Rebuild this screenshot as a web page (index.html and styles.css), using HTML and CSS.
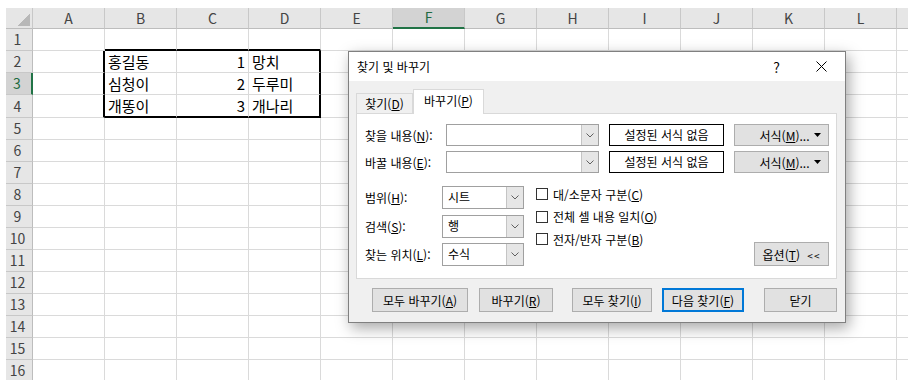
FILE: index.html
```html
<!DOCTYPE html>
<html lang="ko">
  <head>
    <meta charset="utf-8" />
    <title>찾기 및 바꾸기</title>
    <link rel="stylesheet" href="styles.css">
  </head>

  <body>
    <div class="sheet-wrap">
      <table class="sheet">
        <colgroup>
          <col class="rh">
          <col><col><col><col><col><col><col><col><col><col><col><col><col>
        </colgroup>
        <thead>
          <tr>
            <th class="corner"></th>
            <th>A</th><th>B</th><th>C</th><th>D</th><th>E</th><th class="sel-col">F</th>
            <th>G</th><th>H</th><th>I</th><th>J</th><th>K</th><th>L</th><th></th>
          </tr>
        </thead>
        <tbody>
          <tr><th>1</th><td></td><td class="bt"></td><td class="bt"></td><td class="bt"></td><td></td><td></td><td></td><td></td><td></td><td></td><td></td><td></td><td></td></tr>
          <tr><th>2</th><td class="bl"></td><td>홍길동</td><td class="num">1</td><td class="br">망치</td><td></td><td></td><td></td><td></td><td></td><td></td><td></td><td></td><td></td></tr>
          <tr><th class="sel-row">3</th><td class="bl"></td><td>심청이</td><td class="num">2</td><td class="br">두루미</td><td></td><td></td><td></td><td></td><td></td><td></td><td></td><td></td><td></td></tr>
          <tr><th>4</th><td class="bl"></td><td class="bb">개똥이</td><td class="bb num">3</td><td class="bb br">개나리</td><td></td><td></td><td></td><td></td><td></td><td></td><td></td><td></td><td></td></tr>
          <tr><th>5</th><td></td><td></td><td></td><td></td><td></td><td></td><td></td><td></td><td></td><td></td><td></td><td></td><td></td></tr>
          <tr><th>6</th><td></td><td></td><td></td><td></td><td></td><td></td><td></td><td></td><td></td><td></td><td></td><td></td><td></td></tr>
          <tr><th>7</th><td></td><td></td><td></td><td></td><td></td><td></td><td></td><td></td><td></td><td></td><td></td><td></td><td></td></tr>
          <tr><th>8</th><td></td><td></td><td></td><td></td><td></td><td></td><td></td><td></td><td></td><td></td><td></td><td></td><td></td></tr>
          <tr><th>9</th><td></td><td></td><td></td><td></td><td></td><td></td><td></td><td></td><td></td><td></td><td></td><td></td><td></td></tr>
          <tr><th>10</th><td></td><td></td><td></td><td></td><td></td><td></td><td></td><td></td><td></td><td></td><td></td><td></td><td></td></tr>
          <tr><th>11</th><td></td><td></td><td></td><td></td><td></td><td></td><td></td><td></td><td></td><td></td><td></td><td></td><td></td></tr>
          <tr><th>12</th><td></td><td></td><td></td><td></td><td></td><td></td><td></td><td></td><td></td><td></td><td></td><td></td><td></td></tr>
          <tr><th>13</th><td></td><td></td><td></td><td></td><td></td><td></td><td></td><td></td><td></td><td></td><td></td><td></td><td></td></tr>
          <tr><th>14</th><td></td><td></td><td></td><td></td><td></td><td></td><td></td><td></td><td></td><td></td><td></td><td></td><td></td></tr>
          <tr><th>15</th><td></td><td></td><td></td><td></td><td></td><td></td><td></td><td></td><td></td><td></td><td></td><td></td><td></td></tr>
          <tr><th>16</th><td></td><td></td><td></td><td></td><td></td><td></td><td></td><td></td><td></td><td></td><td></td><td></td><td></td></tr>
        </tbody>
      </table>
    </div>

    <!-- Find & Replace dialog floating over the sheet -->
    <div class="dialog">
      <div class="title-bar">
        <span class="title">찾기 및 바꾸기</span>
        <span class="help">?</span>
        <span class="close">
          <svg width="11" height="11" viewBox="0 0 11 11"><path d="M0.5 0.5 L10.5 10.5 M10.5 0.5 L0.5 10.5" stroke="#000" stroke-width="1" fill="none"/></svg>
        </span>
      </div>

      <div class="dialog-body">
        <div class="tabs">
          <div class="tab">찾기(<u>D</u>)</div>
          <div class="tab active">바꾸기(<u>P</u>)</div>
        </div>

        <div class="panel">
          <div class="find-row">
            <label>찾을 내용(<u>N</u>):</label>
            <div class="combo combo-wide">
              <span class="combo-value"></span>
              <span class="combo-arrow"><svg width="8" height="5" viewBox="0 0 8 5"><path d="M0.5 0.5 L4 4 L7.5 0.5" stroke="#606060" fill="none"/></svg></span>
            </div>
            <div class="preview">설정된 서식 없음</div>
            <button class="btn btn-format"><span>서식(<u>M</u>)...</span><svg class="caret" width="7" height="4" viewBox="0 0 7 4"><path d="M0 0 H7 L3.5 4 Z" fill="#000"/></svg></button>
          </div>
          <div class="find-row">
            <label>바꿀 내용(<u>E</u>):</label>
            <div class="combo combo-wide">
              <span class="combo-value"></span>
              <span class="combo-arrow"><svg width="8" height="5" viewBox="0 0 8 5"><path d="M0.5 0.5 L4 4 L7.5 0.5" stroke="#606060" fill="none"/></svg></span>
            </div>
            <div class="preview">설정된 서식 없음</div>
            <button class="btn btn-format"><span>서식(<u>M</u>)...</span><svg class="caret" width="7" height="4" viewBox="0 0 7 4"><path d="M0 0 H7 L3.5 4 Z" fill="#000"/></svg></button>
          </div>

          <div class="options">
            <div class="opt-fields">
              <label>범위(<u>H</u>):</label>
              <div class="combo">
                <span class="combo-value">시트</span>
                <span class="combo-arrow"><svg width="8" height="5" viewBox="0 0 8 5"><path d="M0.5 0.5 L4 4 L7.5 0.5" stroke="#606060" fill="none"/></svg></span>
              </div>
              <label>검색(<u>S</u>):</label>
              <div class="combo">
                <span class="combo-value">행</span>
                <span class="combo-arrow"><svg width="8" height="5" viewBox="0 0 8 5"><path d="M0.5 0.5 L4 4 L7.5 0.5" stroke="#606060" fill="none"/></svg></span>
              </div>
              <label>찾는 위치(<u>L</u>):</label>
              <div class="combo">
                <span class="combo-value">수식</span>
                <span class="combo-arrow"><svg width="8" height="5" viewBox="0 0 8 5"><path d="M0.5 0.5 L4 4 L7.5 0.5" stroke="#606060" fill="none"/></svg></span>
              </div>
            </div>

            <div class="checks">
              <div class="check"><span class="box"></span><span>대/소문자 구분(<u>C</u>)</span></div>
              <div class="check"><span class="box"></span><span>전체 셀 내용 일치(<u>O</u>)</span></div>
              <div class="check"><span class="box"></span><span>전자/반자 구분(<u>B</u>)</span></div>
            </div>

            <button class="btn btn-options">옵션(<u>T</u>) <span class="chev">&lt;&lt;</span></button>
          </div>
        </div>

        <div class="actions">
          <button class="btn btn-replace-all">모두 바꾸기(<u>A</u>)</button>
          <button class="btn btn-replace">바꾸기(<u>R</u>)</button>
          <button class="btn btn-find-all">모두 찾기(<u>I</u>)</button>
          <button class="btn btn-find-next default">다음 찾기(<u>F</u>)</button>
          <button class="btn btn-close">닫기</button>
        </div>
      </div>
    </div>
  </body>
</html>
```

FILE: styles.css
```css
body {
  margin: 0;
  background-color: #fff;
  font-family: "Noto Sans CJK KR", "Noto Sans", sans-serif;
}
.sheet-wrap {
  width: 902px;
  height: 372px;
  margin: 8px 0 0 6px;
  overflow: hidden;
}
.sheet {
  border-collapse: separate;
  border-spacing: 0;
  table-layout: fixed;
  width: 963px;
  font-size: 15px;
  color: #000;
}
.sheet col {
  width: 72px;
}
.sheet col.rh {
  width: 27px;
}
.sheet thead th {
  height: 20px;
  padding: 0;
  box-sizing: border-box;
  background-color: #e6e6e6;
  color: #444;
  font-weight: normal;
  font-size: 14px;
  line-height: 19px;
  border-right: 1px solid #c8c8c8;
  border-bottom: 1px solid #bdbdbd;
}
.sheet thead th.corner {
  background: #e6e6e6 linear-gradient(to bottom right, transparent 50%, #b8b8b8 50%) no-repeat right 2px bottom 2px / 13px 13px;
}
.sheet tbody th {
  height: 22px;
  padding: 0 3px 0 0;
  box-sizing: border-box;
  background-color: #e6e6e6;
  color: #444;
  font-weight: normal;
  font-size: 14px;
  line-height: 21px;
  text-align: center;
  border-right: 1px solid #bdbdbd;
  border-bottom: 1px solid #c8c8c8;
}
.sheet th.sel-col {
  background-color: #d3d3d3;
  color: #1f6b41;
  border-bottom: 2px solid #217346;
}
.sheet th.sel-row {
  background-color: #d3d3d3;
  color: #1f6b41;
  border-right: 2px solid #217346;
}
.sheet td {
  height: 22px;
  padding: 0 3px;
  box-sizing: border-box;
  line-height: 21px;
  white-space: nowrap;
  overflow: hidden;
  border-right: 1px solid #dadada;
  border-bottom: 1px solid #dadada;
}
.sheet td.num {
  text-align: right;
}
/* range outline around B2:D4 */
.sheet td.bt,
.sheet td.bb {
  border-bottom: 2px solid #000;
}
.sheet td.bl,
.sheet td.br {
  border-right: 2px solid #000;
}

.dialog {
  position: absolute;
  left: 348px;
  top: 51px;
  width: 498px;
  height: 272px;
  box-sizing: border-box;
  border: 1px solid #808080;
  background-color: #f0f0f0;
  box-shadow: 3px 5px 14px rgba(0, 0, 0, 0.35);
  font-size: 12px;
  color: #000;
}
.title-bar {
  height: 29px;
  display: flex;
  align-items: center;
  padding-left: 8px;
  background-color: #fff;
}
.title {
  flex: 1;
}
.help {
  font-size: 14px;
  margin-right: 36px;
}
.close {
  display: flex;
  margin-right: 18px;
}
.dialog-body {
  padding: 8px 8px 0 7px;
}
.tabs {
  display: flex;
  align-items: flex-end;
  height: 24px;
}
.tab {
  width: 57px;
  height: 20px;
  box-sizing: border-box;
  border: 1px solid #d9d9d9;
  border-bottom: none;
  text-align: center;
  line-height: 19px;
  background-color: #f0f0f0;
}
.tab.active {
  width: 71px;
  height: 25px;
  margin-bottom: -1px;
  position: relative;
  z-index: 1;
  background-color: #fff;
  line-height: 21px;
}
.panel {
  width: 481px;
  height: 166px;
  box-sizing: border-box;
  padding: 10px 7px 0 8px;
  border: 1px solid #d9d9d9;
  background-color: #fff;
}
.find-row {
  display: flex;
  align-items: center;
  height: 22px;
}
.find-row + .find-row {
  margin-top: 5px;
}
.find-row label {
  width: 81px;
}
.combo {
  display: flex;
  height: 23px;
  box-sizing: border-box;
  border: 1px solid #a0a0a0;
  background-color: #fff;
}
.combo-wide {
  width: 153px;
  height: 22px;
}
.combo-value {
  flex: 1;
  padding-left: 5px;
  line-height: 20px;
}
.combo-arrow {
  width: 16px;
  display: flex;
  align-items: center;
  justify-content: center;
  background-color: #e6e6e6;
  border-left: 1px solid #c4c4c4;
}
.preview {
  width: 115px;
  height: 22px;
  margin-left: 10px;
  box-sizing: border-box;
  border: 1px solid #000;
  text-align: center;
  line-height: 20px;
}
.btn {
  height: 24px;
  padding: 0;
  box-sizing: border-box;
  font-family: inherit;
  font-size: 12px;
  color: #000;
  background-color: #e1e1e1;
  border: 1px solid #adadad;
}
.btn-format {
  width: 95px;
  height: 22px;
  margin-left: 10px;
  display: flex;
  align-items: center;
  padding: 0 7px 0 20px;
}
.btn-format span {
  flex: 1;
  text-align: center;
}
.options {
  display: flex;
  margin-top: 13px;
  height: 80px;
}
.opt-fields {
  display: grid;
  grid-template-columns: 77px 82px;
  grid-auto-rows: 23px;
  row-gap: 5.5px;
  align-items: center;
}
.checks {
  display: flex;
  flex-direction: column;
  margin: -3px 0 0 12px;
}
.check {
  height: 22.5px;
  display: flex;
  align-items: center;
  gap: 5px;
}
.check .box {
  width: 10px;
  height: 10px;
  border: 1px solid #333;
  background-color: #fff;
}
.btn-options {
  width: 75px;
  margin-left: auto;
  align-self: flex-end;
  margin-bottom: 0;
}
.btn-options .chev {
  font-size: 10px;
  letter-spacing: 1px;
  margin-left: 4px;
}
.actions {
  display: flex;
  margin-top: 9px;
  padding-left: 16px;
}
.btn-replace-all {
  width: 96px;
}
.btn-replace {
  width: 74px;
  margin-left: 11px;
}
.btn-find-all {
  width: 80px;
  margin-left: 19px;
}
.btn-find-next {
  width: 82px;
  margin-left: 10px;
}
.btn-close {
  width: 73px;
  margin-left: 20px;
}
.btn.default {
  border: 2px solid #0078d7;
}
```
